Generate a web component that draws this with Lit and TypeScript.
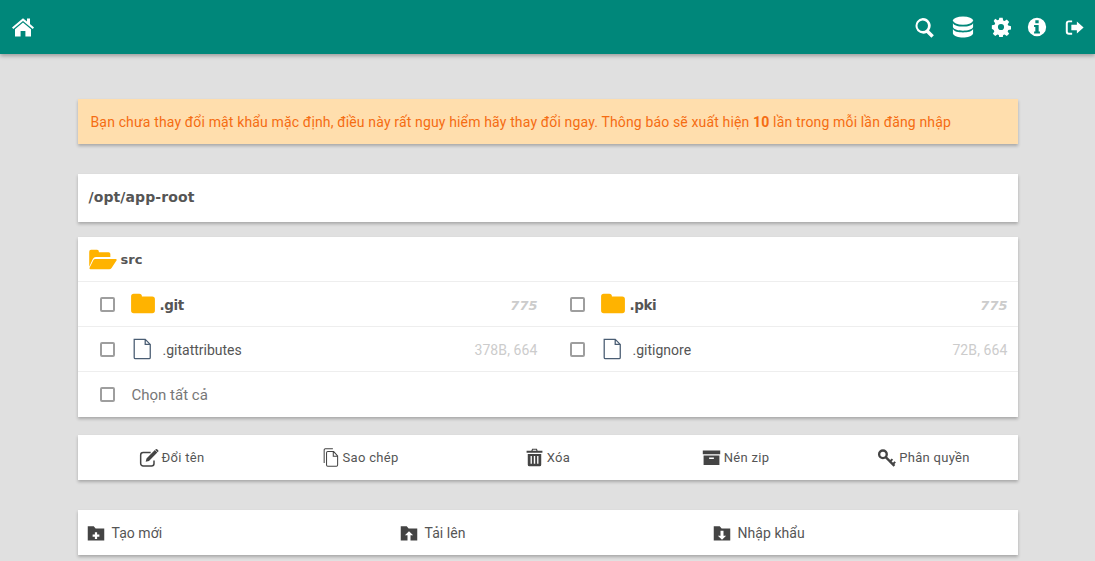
import { LitElement, css, html, svg } from "lit";
import { customElement } from "lit/decorators.js";

const icons: Record<string, any> = {
  home: svg`<path d="M12 3.200 1 12.400l1.300 1.500L12 5.900l9.700 8 1.300-1.500L19 9.100V3.500h-3v3z"/><path d="M12 7.600 4 14.200V21.500h5.600v-5.600h4.800v5.600H20v-7.300z"/>`,
  search: svg`<path fill-rule="evenodd" d="M10 1a9 9 0 0 1 7.200 14.400l5.500 5.500-2.800 2.800-5.500-5.500A9 9 0 1 1 10 1zm0 3a6 6 0 1 0 0 12 6 6 0 0 0 0-12z"/>`,
  database: svg`<ellipse cx="12" cy="5" rx="11" ry="4.500"/><path d="M1 7.500C2 10.500 7 11.500 12 11.500S22 10.500 23 7.500V12c-1 3-6 4-11 4S2 15 1 12z"/><path d="M1 14.300C2 17 7 18 12 18s10-1 11-3.700V19c-1 3-6 4.500-11 4.500S2 22 1 19z"/>`,
  cog: svg`<path fill-rule="evenodd" d="M10 1h4l.6 3.200 1.700.7 2.700-1.800 2.800 2.800-1.800 2.700.7 1.700 3.300.7v4l-3.300.6-.7 1.700 1.800 2.700-2.800 2.800-2.700-1.800-1.700.7-.6 3.300h-4l-.6-3.300-1.700-.7-2.700 1.800-2.800-2.800 1.800-2.700-.7-1.700L1 14V10l3.300-.7.7-1.700-1.800-2.700L5 2.100l2.700 1.800 1.700-.7zM12 8.300a3.700 3.700 0 1 0 0 7.400 3.700 3.700 0 0 0 0-7.400z"/>`,
  info: svg`<path fill-rule="evenodd" d="M12 1a11 11 0 1 1 0 22 11 11 0 0 1 0-22zM10 3.800v3.600h4V3.800zM8.500 9.500v2.400H10v5.400H8.500v2.400h7v-2.400H14V9.500z"/>`,
  signout: svg`<path d="M9 3H5a4 4 0 0 0-4 4v10a4 4 0 0 0 4 4h4v-2.500H5A1.500 1.500 0 0 1 3.500 17V7A1.500 1.500 0 0 1 5 5.500h4z"/><path d="M15 4.500 23.500 12 15 19.500V15.500H8v-7h7z"/>`,
  folderOpen: svg`<path d="M1 18V5.500A1.500 1.500 0 0 1 2.500 4h5A1.500 1.500 0 0 1 9 5.500V6h8a1.500 1.500 0 0 1 1.500 1.500V10H6.500a3 3 0 0 0-2.500 1.500z"/><path d="M6 11.500h17a.8.8 0 0 1 .7 1.200L19.500 19a2.500 2.500 0 0 1-2 1H2a.8.8 0 0 1-.7-1.200L4.500 12.500A2 2 0 0 1 6 11.500z"/>`,
  folder: svg`<path d="M1 6a2.500 2.500 0 0 1 2.500-2.500h5A2.500 2.500 0 0 1 11 6h9.500A2.500 2.500 0 0 1 23 8.500V19a2.500 2.500 0 0 1-2.500 2.500h-17A2.500 2.500 0 0 1 1 19z"/>`,
  file: svg`<path fill="none" stroke="currentColor" stroke-width="1.400" d="M3.500 1.500h12l5.500 5.500v14.200a1.300 1.300 0 0 1-1.300 1.300H4.800a1.300 1.300 0 0 1-1.300-1.300zM15.500 1.500V7H21"/>`,
  edit: svg`<path fill="none" stroke="currentColor" stroke-width="1.800" d="M18 15v3.500a3 3 0 0 1-3 3H5a3 3 0 0 1-3-3v-10a3 3 0 0 1 3-3h9"/><path d="M19 2.500 22 5.500 12 15.500l-4 1 1-4zM20 1.500a1.200 1.200 0 0 1 1.700 0l1.300 1.300a1.200 1.200 0 0 1 0 1.700L22.500 5 19.500 2z"/>`,
  copy: svg`<path fill="none" stroke="currentColor" stroke-width="1.300" d="M15 1H5.500A1.500 1.500 0 0 0 4 2.500V19M8.500 4.500h7.500l5 5.500v11.500a1.500 1.500 0 0 1-1.500 1.500H8.500A1.500 1.500 0 0 1 7 21.500V6a1.500 1.500 0 0 1 1.500-1.500zM15.500 4.500V10.500H21"/>`,
  trash: svg`<path fill-rule="evenodd" d="M9 1h6l1 2.500h6V6H2V3.500h6zM10 2.300l-.4 1.200h4.800L14 2.300zM3.500 7.500h17V21a2 2 0 0 1-2 2h-13a2 2 0 0 1-2-2zM7 10v10h1.700V10zM11.100 10v10h1.800V10zM15.300 10v10H17V10z"/>`,
  archive: svg`<path fill-rule="evenodd" d="M1 3h22v5H1zM2 9.500h20V21.500H2zM9 12v2h6v-2z"/>`,
  key: svg`<g fill="none" stroke="currentColor"><circle cx="7.500" cy="8" r="4.800" stroke-width="3"/><path stroke-width="3" d="M11 11.500 22 22.500"/><path stroke-width="2.500" d="M16.500 17 19.500 14M20 20.500 23 17.500"/></g>`,
  folderPlus: svg`<path fill-rule="evenodd" d="M1 3h8l2.500 3H23v16H1zM10.500 11v3h-3v3h3v3h3v-3h3v-3h-3v-3z"/>`,
  folderUp: svg`<path fill-rule="evenodd" d="M1 3h8l2.500 3H23v16H1zM12 9.500 6.500 15h3.500v7h4v-7h3.500z"/>`,
  folderDown: svg`<path fill-rule="evenodd" d="M1 3h8l2.500 3H23v16H1zM10 9v6.500H6.500L12 21l5.500-5.500H14V9z"/>`,
};

const icon = (name: string, cls = "") =>
  html`<svg class="icon ${cls}" viewBox="0 0 24 24" fill="currentColor">${icons[name]}</svg>`;

@customElement("app-root")
export class AppRoot extends LitElement {
  static styles = css`
    :host {
      display: block;
      min-height: 561px;
      background: #e0e0e0;
      font-family: Roboto, "Liberation Sans", sans-serif;
      font-size: 14px;
      color: #555;
      overflow: hidden;
    }
    .icon {
      display: block;
      flex: none;
    }
    .header {
      height: 54px;
      background: #00877a;
      box-shadow: 0 2px 4px rgba(0, 0, 0, 0.3);
      color: #fff;
      display: flex;
      align-items: center;
      justify-content: space-between;
      padding: 0 11px;
    }
    .header .icon {
      width: 24px;
      height: 24px;
    }
    .header-right {
      display: flex;
      align-items: center;
      gap: 16px;
    }
    .header-right .icon {
      width: 20px;
      height: 20px;
    }
    .header-right .icon.search {
      width: 21px;
      height: 21px;
    }
    .header-right .icon.db {
      width: 22px;
      height: 22px;
      margin: -1px 1.5px 0 0.5px;
    }
    .header-right .icon.info {
      margin-right: 2px;
    }
    .header-right .icon.signout {
      width: 19px;
      height: 19px;
    }
    .main {
      width: 940px;
      margin: 0 auto;
      padding-top: 45px;
    }
    .card {
      background: #fff;
      box-shadow: 0 2px 3px rgba(0, 0, 0, 0.25);
    }
    .notice {
      height: 45px;
      background: #ffdead;
      color: #f56c12;
      display: flex;
      align-items: center;
      padding-left: 13px;
      font-size: 14px;
      letter-spacing: 0.15px;
      margin-bottom: 30px;
      white-space: pre;
    }
    .path {
      height: 48px;
      box-sizing: border-box;
      padding: 0 0 2px 11px;
      display: flex;
      align-items: center;
      font-family: "DejaVu Sans", sans-serif;
      font-size: 14px;
      font-weight: bold;
      letter-spacing: 0.1px;
      margin-bottom: 15px;
    }
    .list {
      margin-bottom: 18px;
    }
    .row {
      height: 45px;
      box-sizing: border-box;
      display: flex;
      align-items: center;
      border-bottom: 1px solid #eee;
    }
    .row:last-child {
      border-bottom: none;
    }
    .parent {
      padding-left: 10px;
      gap: 4px;
      font-family: "DejaVu Sans", sans-serif;
      font-weight: bold;
      font-size: 13px;
    }
    .parent .icon {
      width: 29px;
      height: 29px;
      color: #ffb300;
    }
    .col {
      width: 470px;
      display: flex;
      align-items: center;
      box-sizing: border-box;
      padding: 0 10px 0 22px;
    }
    .box {
      width: 15px;
      height: 15px;
      box-sizing: border-box;
      border: 2px solid #9e9e9e;
      border-radius: 2px;
      flex: none;
      margin-right: 15px;
    }
    .col .folder {
      width: 26px;
      height: 26px;
      color: #ffb300;
      margin: 0 4px 3px 0;
    }
    .col .file {
      width: 22px;
      height: 22px;
      color: #4a5d73;
      margin: 0 10px 0 1px;
    }
    .name {
      flex: 1;
      font-size: 14px;
      padding-top: 2px;
    }
    .name.dir {
      font-family: "DejaVu Sans", sans-serif;
      font-weight: bold;
      font-size: 13.5px;
      letter-spacing: -0.4px;
    }
    .meta {
      color: #ccc;
      font-size: 14px;
      letter-spacing: 0.1px;
      padding-top: 2px;
    }
    .meta.dir {
      font-family: "DejaVu Sans", sans-serif;
      font-weight: bold;
      font-style: italic;
      font-size: 13px;
      letter-spacing: 0;
    }
    .select-all {
      color: #777;
      font-size: 15px;
      margin-left: 2px;
    }
    .actions {
      height: 45px;
      display: grid;
      grid-template-columns: repeat(5, 1fr);
      align-items: center;
      margin-bottom: 30px;
    }
    .action {
      display: flex;
      align-items: center;
      justify-content: center;
      gap: 3px;
      font-size: 13px;
      letter-spacing: 0.3px;
    }
    .action .icon {
      width: 19px;
      height: 19px;
      color: #444;
    }
    .action .icon.edit {
      width: 20px;
      height: 20px;
    }
    .create {
      height: 45px;
      display: grid;
      grid-template-columns: repeat(3, 313px);
      align-items: center;
      padding-left: 9px;
    }
    .create-item {
      display: flex;
      align-items: center;
      gap: 7px;
      font-size: 14px;
      letter-spacing: 0.05px;
    }
    .create-item .icon {
      width: 18px;
      height: 18px;
      color: #444;
    }
  `;

  private file(name: string, meta: string, dir: boolean) {
    return html`<div class="col">
      <span class="box"></span>
      ${dir ? icon("folder", "folder") : icon("file", "file")}
      <span class="name ${dir ? "dir" : ""}">${name}</span>
      <span class="meta ${dir ? "dir" : ""}">${meta}</span>
    </div>`;
  }

  render() {
    return html`
      <div class="header">
        ${icon("home")}
        <div class="header-right">
          ${icon("search", "search")} ${icon("database", "db")} ${icon("cog")}
          ${icon("info", "info")} ${icon("signout", "signout")}
        </div>
      </div>
      <div class="main">
        <div class="card notice"><span>Bạn chưa thay đổi mật khẩu mặc định, điều này rất nguy hiểm hãy thay đổi ngay. Thông báo sẽ xuất hiện <b>10</b> lần trong mỗi lần đăng nhập</span></div>
        <div class="card path">/opt/app-root</div>
        <div class="card list">
          <div class="row parent">${icon("folderOpen")}<span>src</span></div>
          <div class="row">
            ${this.file(".git", "775", true)} ${this.file(".pki", "775", true)}
          </div>
          <div class="row">
            ${this.file(".gitattributes", "378B, 664", false)}
            ${this.file(".gitignore", "72B, 664", false)}
          </div>
          <div class="row">
            <div class="col">
              <span class="box"></span><span class="select-all">Chọn tất cả</span>
            </div>
          </div>
        </div>
        <div class="card actions">
          <div class="action">${icon("edit", "edit")}<span>Đổi tên</span></div>
          <div class="action">${icon("copy")}<span>Sao chép</span></div>
          <div class="action">${icon("trash")}<span>Xóa</span></div>
          <div class="action">${icon("archive")}<span>Nén zip</span></div>
          <div class="action">${icon("key")}<span>Phân quyền</span></div>
        </div>
        <div class="card create">
          <div class="create-item">${icon("folderPlus")}<span>Tạo mới</span></div>
          <div class="create-item">${icon("folderUp")}<span>Tải lên</span></div>
          <div class="create-item">${icon("folderDown")}<span>Nhập khẩu</span></div>
        </div>
      </div>
    `;
  }
}
